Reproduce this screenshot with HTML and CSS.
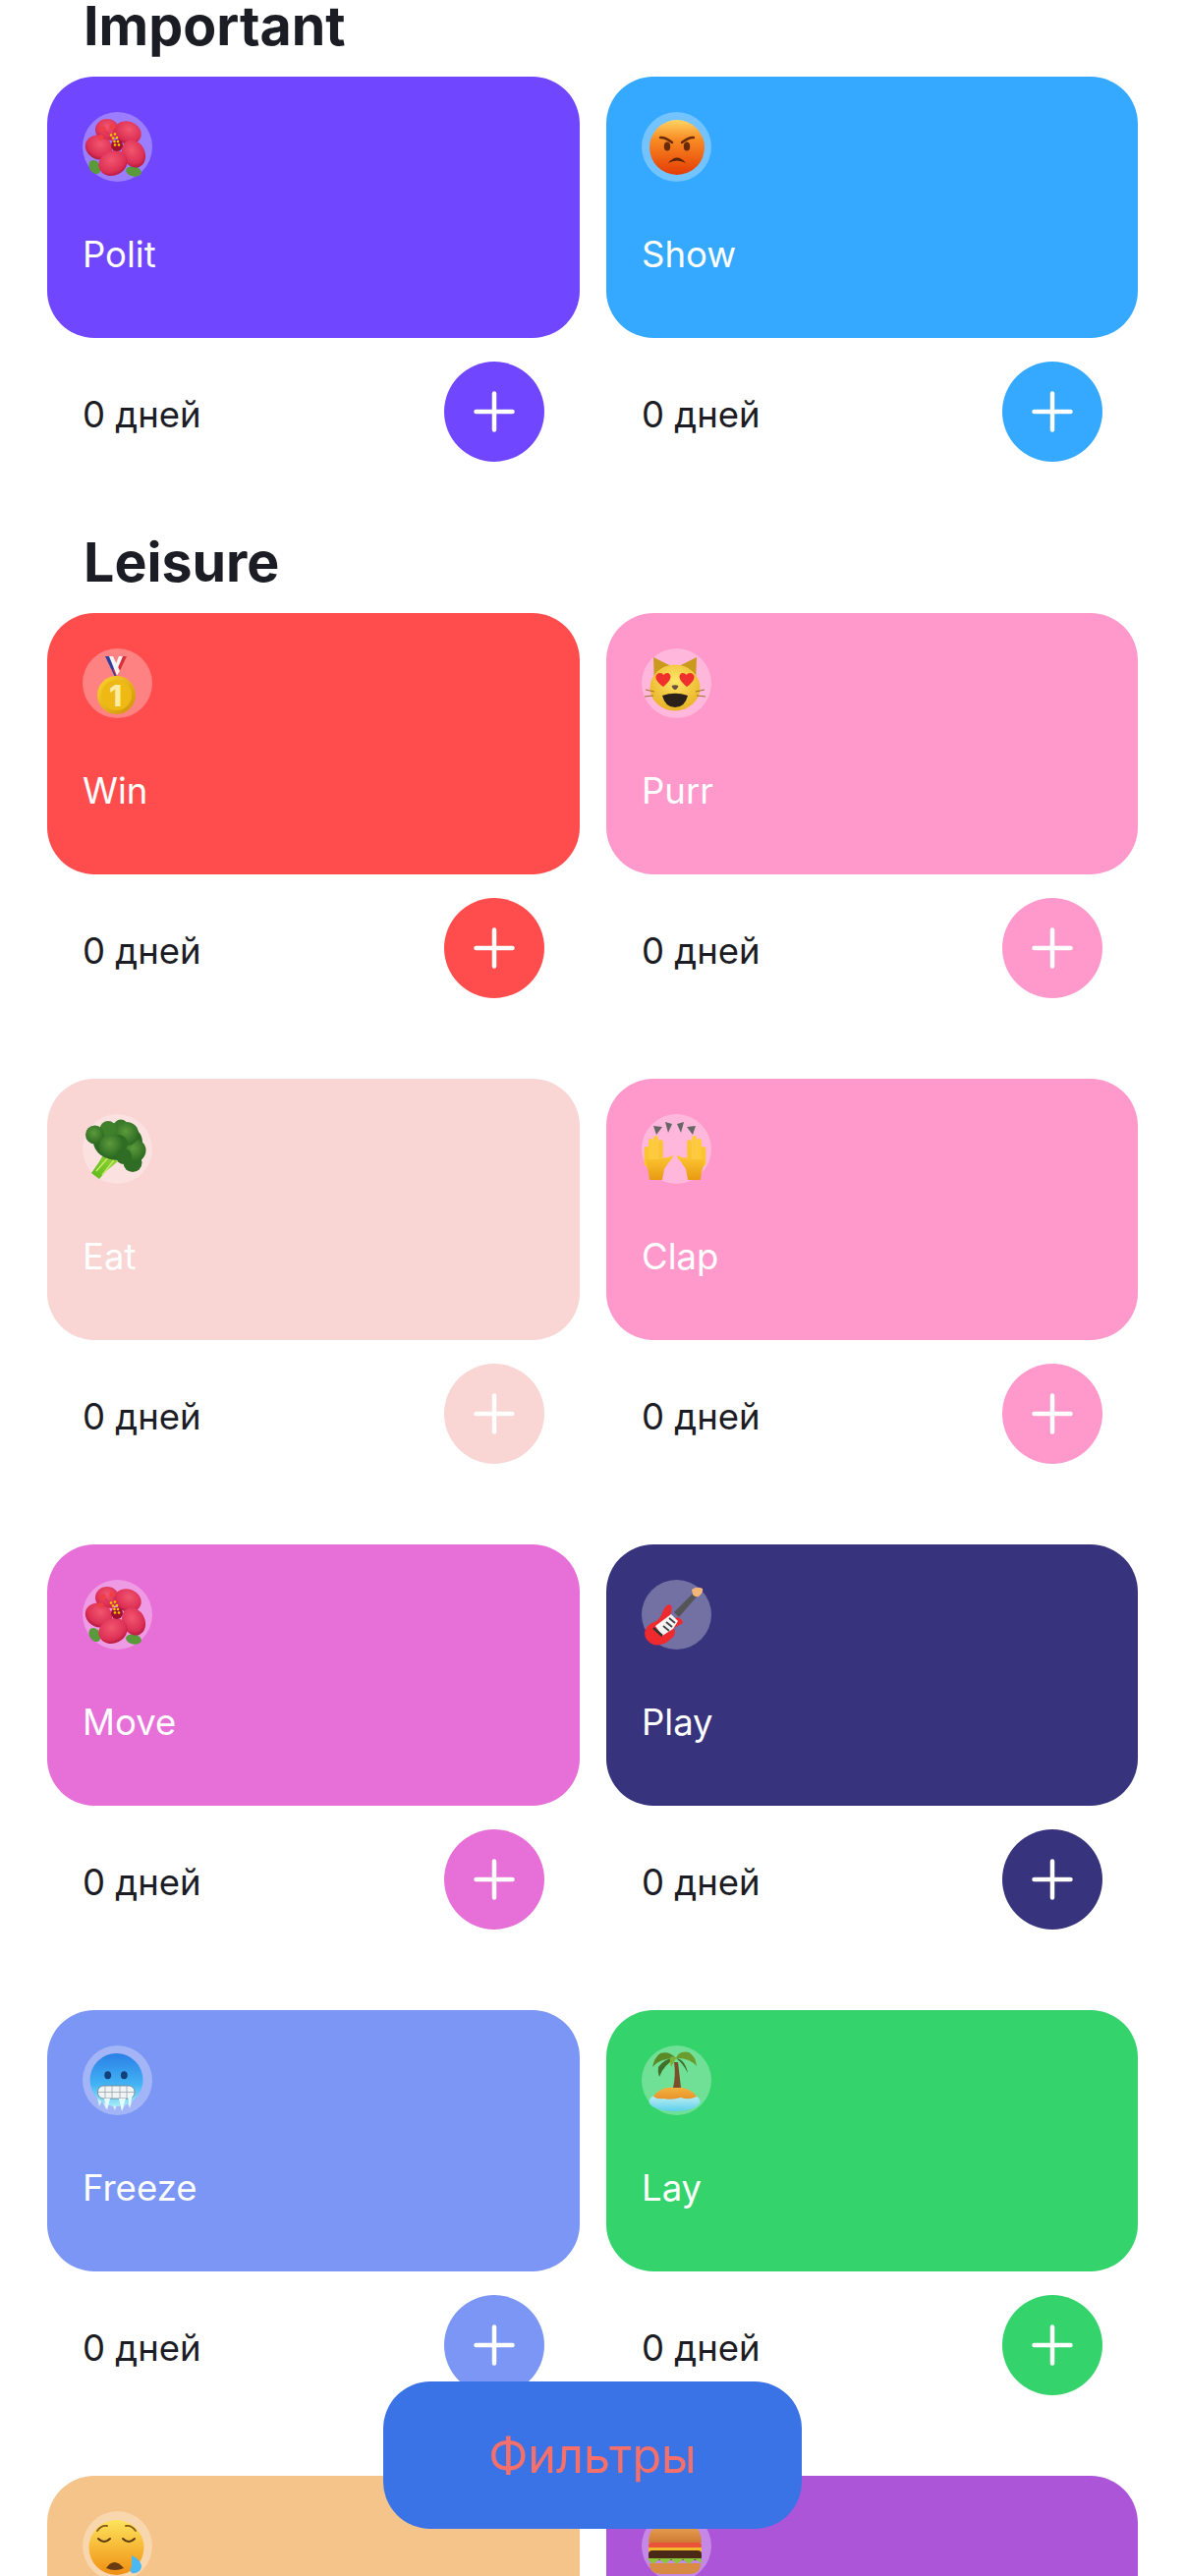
FILE: index.html
```html
<!DOCTYPE html>
<html lang="ru">
<head>
    <meta charset="UTF-8">
    <meta name="viewport" content="width=device-width, initial-scale=1.0">
    <title>Habits</title>
    <link rel="stylesheet" href="styles.css">
</head>
<body>
    <!-- emoji drawn once, used by every card -->
    <svg class="sprite" xmlns="http://www.w3.org/2000/svg">
        <defs>
            <radialGradient id="petal" cx="50%" cy="35%" r="70%">
                <stop offset="0" stop-color="#f2566f"/>
                <stop offset="0.7" stop-color="#dc2f55"/>
                <stop offset="1" stop-color="#a81038"/>
            </radialGradient>
            <linearGradient id="angryFace" x1="0" y1="0" x2="0" y2="1">
                <stop offset="0" stop-color="#ffd465"/>
                <stop offset="0.35" stop-color="#f98c25"/>
                <stop offset="1" stop-color="#e43c04"/>
            </linearGradient>
            <linearGradient id="gold" x1="0" y1="0" x2="1" y2="1">
                <stop offset="0" stop-color="#fbd62e"/>
                <stop offset="1" stop-color="#cf9008"/>
            </linearGradient>
            <radialGradient id="catFace" cx="50%" cy="35%" r="70%">
                <stop offset="0" stop-color="#fee668"/>
                <stop offset="1" stop-color="#e8ae20"/>
            </radialGradient>
            <radialGradient id="broc" cx="45%" cy="40%" r="60%">
                <stop offset="0" stop-color="#5c9a3c"/>
                <stop offset="1" stop-color="#2c6a22"/>
            </radialGradient>
            <linearGradient id="stalk" x1="1" y1="0" x2="0" y2="1">
                <stop offset="0" stop-color="#9bd53a"/>
                <stop offset="1" stop-color="#5cb81c"/>
            </linearGradient>
            <linearGradient id="hand" x1="0" y1="0" x2="0" y2="1">
                <stop offset="0" stop-color="#fcc733"/>
                <stop offset="1" stop-color="#e99a12"/>
            </linearGradient>
            <linearGradient id="coldFace" x1="0" y1="0" x2="0" y2="1">
                <stop offset="0" stop-color="#2a7fe6"/>
                <stop offset="0.6" stop-color="#43b4f4"/>
                <stop offset="1" stop-color="#a5ecf8"/>
            </linearGradient>
            <linearGradient id="sand" x1="0" y1="0" x2="0" y2="1">
                <stop offset="0" stop-color="#f3b340"/>
                <stop offset="1" stop-color="#e8922a"/>
            </linearGradient>
            <linearGradient id="sea" x1="0" y1="0" x2="0" y2="1">
                <stop offset="0" stop-color="#d7f6f4"/>
                <stop offset="1" stop-color="#5cd0ec"/>
            </linearGradient>
            <linearGradient id="sleepFace" x1="0" y1="0" x2="0" y2="1">
                <stop offset="0" stop-color="#fde35c"/>
                <stop offset="1" stop-color="#f08f12"/>
            </linearGradient>
            <linearGradient id="bun" x1="0" y1="0" x2="0" y2="1">
                <stop offset="0" stop-color="#f0b060"/>
                <stop offset="1" stop-color="#d07a34"/>
            </linearGradient>

            <symbol id="e-hibiscus" viewBox="0 0 72 72">
                <ellipse cx="12.500" cy="56" rx="5.500" ry="7.500" fill="#5a9a3a" transform="rotate(-30 12.500 56)"/>
                <ellipse cx="52" cy="60.500" rx="8" ry="5" fill="#5a9a3a" transform="rotate(10 52 60.500)"/>
                <ellipse cx="25" cy="18" rx="12" ry="11" fill="url(#petal)"/>
                <ellipse cx="46" cy="21" rx="14" ry="11.500" fill="url(#petal)" transform="rotate(20 46 21)"/>
                <ellipse cx="16.500" cy="36" rx="14" ry="12" fill="url(#petal)" transform="rotate(25 16.500 36)"/>
                <ellipse cx="52" cy="42.500" rx="11.500" ry="14.500" fill="url(#petal)" transform="rotate(-25 52 42.500)"/>
                <ellipse cx="31" cy="52" rx="15" ry="12.500" fill="url(#petal)" transform="rotate(-25 31 52)"/>
                <circle cx="35" cy="34" r="6" fill="#a0102e"/>
                <path d="M20 17 L32 27 M31 15 L33 27 M19 26 L32 29" stroke="#d8324e" stroke-width="1.300"/>
                <circle cx="20.500" cy="17.500" r="3" fill="#ee3f44"/>
                <circle cx="30.500" cy="15" r="3" fill="#ee3f44"/>
                <circle cx="18.500" cy="26" r="2.800" fill="#ee3f44"/>
                <g fill="#f7c900">
                    <circle cx="29" cy="23.500" r="1.300"/><circle cx="33" cy="22.500" r="1.300"/>
                    <circle cx="31" cy="26.500" r="1.300"/><circle cx="35" cy="26" r="1.300"/>
                    <circle cx="32.500" cy="30" r="1.300"/><circle cx="36" cy="30" r="1.300"/>
                    <circle cx="33" cy="33.500" r="1.300"/><circle cx="37" cy="33.500" r="1.300"/>
                </g>
            </symbol>

            <symbol id="e-angry" viewBox="0 0 72 72">
                <circle cx="36" cy="36" r="28" fill="url(#angryFace)"/>
                <path d="M19 26 Q24 25.500 31 31 M53 26 Q48 25.500 41 31" fill="none" stroke="#6a2a06" stroke-width="2.400" stroke-linecap="round"/>
                <ellipse cx="26" cy="35" rx="3.200" ry="4.600" fill="#6a2a06"/>
                <ellipse cx="46" cy="35" rx="3.200" ry="4.600" fill="#6a2a06"/>
                <path d="M27 52 Q36 41 45 52 Q36 47 27 52Z" fill="#5c2206"/>
            </symbol>

            <symbol id="e-medal" viewBox="0 0 72 72">
                <path d="M23 8 L30 8 L37 22 L33 29 Z" fill="#2c3f9e"/>
                <path d="M45 8 L38 8 L31 22 L35 29 Z" fill="#d8303a"/>
                <path d="M27 8 L31 8 L38 23 L35 28 Z" fill="#f4f4f4"/>
                <path d="M41 8 L37 8 L33 18 L35 22 Z" fill="#f4f4f4"/>
                <circle cx="34.500" cy="47.500" r="19.500" fill="url(#gold)"/>
                <circle cx="34.500" cy="47.500" r="15.500" fill="#efb915"/>
                <text class="medal-num" x="33.500" y="58.500" text-anchor="middle">1</text>
            </symbol>

            <symbol id="e-cat" viewBox="0 0 72 72">
                <path d="M12 9 L13 36 L32 19 Z" fill="#c99a1c"/>
                <path d="M56 9 L55 36 L36 19 Z" fill="#c99a1c"/>
                <ellipse cx="34" cy="40" rx="25.500" ry="23.500" fill="url(#catFace)"/>
                <path d="M4 42 L13 44 M3 49 L12 48 M64 42 L55 44 M65 49 L56 48" stroke="#8d6a1e" stroke-width="0.900"/>
                <path d="M22 39 C15 34 12.500 29 16 26 C18.500 24 21 25 22.500 27 C24 25 27.500 24 29 27 C31 30 27 35 22 39Z" fill="#f0302c"/>
                <path d="M46 39 C53 34 55.500 29 52 26 C49.500 24 47 25 45.500 27 C44 25 40.500 24 39 27 C37 30 41 35 46 39Z" fill="#f0302c"/>
                <path d="M30.500 38 Q34 36.500 37.500 38 Q36 42 34 42 Q32 42 30.500 38Z" fill="#6a5040"/>
                <path d="M21 48 Q34 43.500 47 48 Q44 60 34 60 Q24 60 21 48Z" fill="#2a2218"/>
            </symbol>

            <symbol id="e-broccoli" viewBox="0 0 72 72">
                <path d="M22 40 L36 48 L24 58 L17 66 L9 60 L16 50 Z" fill="url(#stalk)"/>
                <path d="M14 58 L28 42 M20 62 L32 47" stroke="#c6ea66" stroke-width="1.600"/>
                <ellipse cx="36" cy="28" rx="25" ry="19" fill="#2c6a22"/>
                <circle cx="51" cy="49.500" r="9.500" fill="#2f6d24"/>
                <circle cx="53" cy="37" r="11.500" fill="url(#broc)"/>
                <circle cx="39" cy="13" r="7.500" fill="#3a7a2a"/>
                <circle cx="26" cy="15.500" r="8.500" fill="#3f802c"/>
                <circle cx="45" cy="20" r="12" fill="url(#broc)"/>
                <circle cx="37" cy="30" r="9" fill="#2f6d24"/>
                <circle cx="12.500" cy="21" r="9.500" fill="url(#broc)"/>
                <circle cx="29" cy="32.500" r="12" fill="url(#broc)"/>
                <circle cx="42" cy="43" r="8" fill="#2f6d24"/>
            </symbol>

            <symbol id="e-hands" viewBox="0 0 72 72">
                <g fill="#666">
                    <path d="M12 12 L21 13 L15 21 Z"/>
                    <path d="M24 8 L31 10 L27 19 Z"/>
                    <path d="M43 8 L36 10 L40 19 Z"/>
                    <path d="M55 12 L46 13 L52 21 Z"/>
                </g>
                <g id="raisedHand">
                    <rect x="2.600" y="33" width="4.800" height="20" rx="2.400" fill="#fbc531"/>
                    <rect x="7" y="25" width="4.800" height="26" rx="2.400" fill="#fdcb38"/>
                    <rect x="12" y="22" width="4.800" height="28" rx="2.400" fill="#fdcb38"/>
                    <rect x="17" y="26" width="4.800" height="24" rx="2.400" fill="#fbc531"/>
                    <path d="M4 46 H22 L22.500 44 Q26 45.500 30 42.500 Q32 41.500 32 43.500 Q31 46 28 48.500 L23 56 L21 67 H8 Q7 58 5.500 54 Z" fill="url(#hand)"/>
                </g>
                <use href="#raisedHand" transform="translate(68 0) scale(-1 1)"/>
            </symbol>

            <symbol id="e-guitar" viewBox="0 0 72 72">
                <path d="M33 33 L53 13 L57 16 L38 38 Z" fill="#555"/>
                <path d="M51 10 Q56 6 62 9 Q63 13 58 17 Q54 18 52 15 Z" fill="#f2b778"/>
                <path d="M28 25 Q32 26 30 33 Q28 38 33 40 L36 38 Q42 40 42 44 L33 49 Q36 56 30 60 Q22 68 12 66 Q3 62 3 54 Q4 46 13 43 Q18 41 21 34 Q23 27 28 25Z" fill="#ee2a2e"/>
                <path d="M14 47 L30 35 L37 42 L32 50 L21 57 Z" fill="#f4f4f4"/>
                <path d="M22 47 L28 52 M25 43 L31 48 M28 39 L34 44" stroke="#444" stroke-width="1.800"/>
                <path d="M12 49 L21 57" stroke="#333" stroke-width="2.400"/>
            </symbol>

            <symbol id="e-cold" viewBox="0 0 72 72">
                <path d="M14 48 L17 62 L20 56 L24 65 L27 54 L33 66 L37 54 L40 67 L45 56 L48 64 L53 48 Z" fill="#cdf2f8"/>
                <circle cx="34.500" cy="35" r="27" fill="url(#coldFace)"/>
                <ellipse cx="25.700" cy="30.300" rx="3.400" ry="4" fill="#12407a"/>
                <ellipse cx="42.300" cy="30.300" rx="3.400" ry="4" fill="#12407a"/>
                <rect x="15.500" y="41" width="37.500" height="13" rx="6" fill="#f2f4f4" stroke="#6a7e90" stroke-width="0.800"/>
                <path d="M16 47.500 H53 M23 41 V54 M30 41 V54 M38 41 V54 M45 41 V54" stroke="#8a9aa8" stroke-width="0.700"/>
                <path d="M22 54 L25 66 L28 54 Z M37 54 L40 66 L44 54 Z M46 52 L48 62 L51 50 Z" fill="#e6fafc"/>
            </symbol>

            <symbol id="e-island" viewBox="0 0 72 72">
                <ellipse cx="33.500" cy="57" rx="26" ry="10" fill="url(#sea)"/>
                <path d="M12 52 Q18 42 33 42.500 Q50 42 56 52 Q48 56 40 53 Q30 56 22 54 Q16 55 12 52Z" fill="url(#sand)"/>
                <path d="M33 17 L37 17 L40 43 L32 43 Q35 30 33 17Z" fill="#7a5028"/>
                <path d="M35 13 Q28 5 19 8 Q13 12 11 22 Q18 13 35 13Z" fill="#5a8a28"/>
                <path d="M35 13 Q24 12 17 22 Q16 27 18 32 Q22 20 35 13Z" fill="#41702a"/>
                <path d="M35 13 Q38 5 48 7 Q55 11 56 21 Q48 12 35 13Z" fill="#6a9c2e"/>
                <path d="M35 13 Q44 14 47 28 Q42 18 35 13Z" fill="#41702a"/>
                <path d="M35 13 Q26 7 30 22 Q33 17 35 13Z" fill="#7cb236"/>
            </symbol>

            <symbol id="e-sleepy" viewBox="0 0 72 72">
                <circle cx="34.500" cy="37" r="28" fill="url(#sleepFace)"/>
                <path d="M15 20 Q19 14 25 15 M54 20 Q50 14 44 15" fill="none" stroke="#8a5a14" stroke-width="1.800" stroke-linecap="round"/>
                <path d="M16 28 Q22 34 28 28 M41 28 Q47 34 53 28" fill="none" stroke="#5c3a10" stroke-width="2" stroke-linecap="round"/>
                <path d="M24 58 Q32 46 42 58 Q33 62 24 58Z" fill="#6a3a14"/>
                <path d="M50 45 Q60 50 60 57 Q58 64 50 63 Q47 60 50 56 Q50 50 50 45Z" fill="#4bb8f2"/>
            </symbol>

            <symbol id="e-burger" viewBox="0 0 72 72">
                <path d="M7 32 Q8 8 34 8 Q60 8 61 32 Z" fill="url(#bun)"/>
                <rect x="7" y="32" width="54" height="6" rx="3" fill="#e8533a"/>
                <rect x="7" y="37" width="54" height="4" fill="#f4b82c"/>
                <rect x="7" y="40" width="54" height="10" rx="4" fill="#4a2a16"/>
                <path d="M6 49 L12 54 L18 49 L24 54 L30 49 L36 54 L42 49 L48 54 L54 49 L62 53 L60 48 L6 48Z" fill="#8cc63a"/>
                <path d="M8 53 H60 Q60 64 48 64 H20 Q8 64 8 53Z" fill="#d98a44"/>
            </symbol>

            <symbol id="plus" viewBox="0 0 42 42">
                <path d="M21 2.500 V39.500 M2.500 21 H39.500" fill="none" stroke="#fff" stroke-width="4.500" stroke-linecap="round"/>
            </symbol>
        </defs>
    </svg>

    <div class="screen">
        <div class="scroll">
            <section class="section">
                <h2 class="section-title">Important</h2>
                <div class="grid">
                    <article class="habit purple">
                        <div class="card">
                            <div class="icon"><svg><use href="#e-hibiscus"/></svg></div>
                            <div class="card-title">Polit</div>
                        </div>
                        <div class="footer">
                            <span class="days">0 дней</span>
                            <button class="add"><svg><use href="#plus"/></svg></button>
                        </div>
                    </article>
                    <article class="habit blue">
                        <div class="card">
                            <div class="icon"><svg><use href="#e-angry"/></svg></div>
                            <div class="card-title">Show</div>
                        </div>
                        <div class="footer">
                            <span class="days">0 дней</span>
                            <button class="add"><svg><use href="#plus"/></svg></button>
                        </div>
                    </article>
                </div>
            </section>

            <section class="section">
                <h2 class="section-title">Leisure</h2>
                <div class="grid">
                    <article class="habit red">
                        <div class="card">
                            <div class="icon"><svg><use href="#e-medal"/></svg></div>
                            <div class="card-title">Win</div>
                        </div>
                        <div class="footer">
                            <span class="days">0 дней</span>
                            <button class="add"><svg><use href="#plus"/></svg></button>
                        </div>
                    </article>
                    <article class="habit pink">
                        <div class="card">
                            <div class="icon"><svg><use href="#e-cat"/></svg></div>
                            <div class="card-title">Purr</div>
                        </div>
                        <div class="footer">
                            <span class="days">0 дней</span>
                            <button class="add"><svg><use href="#plus"/></svg></button>
                        </div>
                    </article>
                    <article class="habit blush">
                        <div class="card">
                            <div class="icon"><svg><use href="#e-broccoli"/></svg></div>
                            <div class="card-title">Eat</div>
                        </div>
                        <div class="footer">
                            <span class="days">0 дней</span>
                            <button class="add"><svg><use href="#plus"/></svg></button>
                        </div>
                    </article>
                    <article class="habit pink">
                        <div class="card">
                            <div class="icon"><svg><use href="#e-hands"/></svg></div>
                            <div class="card-title">Clap</div>
                        </div>
                        <div class="footer">
                            <span class="days">0 дней</span>
                            <button class="add"><svg><use href="#plus"/></svg></button>
                        </div>
                    </article>
                    <article class="habit orchid">
                        <div class="card">
                            <div class="icon"><svg><use href="#e-hibiscus"/></svg></div>
                            <div class="card-title">Move</div>
                        </div>
                        <div class="footer">
                            <span class="days">0 дней</span>
                            <button class="add"><svg><use href="#plus"/></svg></button>
                        </div>
                    </article>
                    <article class="habit navy">
                        <div class="card">
                            <div class="icon"><svg><use href="#e-guitar"/></svg></div>
                            <div class="card-title">Play</div>
                        </div>
                        <div class="footer">
                            <span class="days">0 дней</span>
                            <button class="add"><svg><use href="#plus"/></svg></button>
                        </div>
                    </article>
                    <article class="habit periwinkle">
                        <div class="card">
                            <div class="icon"><svg><use href="#e-cold"/></svg></div>
                            <div class="card-title">Freeze</div>
                        </div>
                        <div class="footer">
                            <span class="days">0 дней</span>
                            <button class="add"><svg><use href="#plus"/></svg></button>
                        </div>
                    </article>
                    <article class="habit green">
                        <div class="card">
                            <div class="icon"><svg><use href="#e-island"/></svg></div>
                            <div class="card-title">Lay</div>
                        </div>
                        <div class="footer">
                            <span class="days">0 дней</span>
                            <button class="add"><svg><use href="#plus"/></svg></button>
                        </div>
                    </article>
                    <article class="habit peach">
                        <div class="card">
                            <div class="icon"><svg><use href="#e-sleepy"/></svg></div>
                        </div>
                    </article>
                    <article class="habit violet">
                        <div class="card">
                            <div class="icon"><svg><use href="#e-burger"/></svg></div>
                        </div>
                    </article>
                </div>
            </section>
        </div>

        <button class="filters">Фильтры</button>
    </div>
</body>
</html>
```

FILE: styles.css
```css
body {
    margin: 0;
    background-color: #fff;
    font-family: Inter, "Noto Sans", sans-serif;
    color: #1c1c24;
}

.sprite {
    position: absolute;
    width: 0;
    height: 0;
}

.screen {
    position: relative;
    height: 2622px;
    overflow: hidden;
}

.scroll {
    padding: 0 48px;
}

.section {
    margin-bottom: 76px;
}

.section-title {
    margin: 0 0 26px 37px;
    font-size: 55.5px;
    line-height: 52px;
    font-weight: 700;
}

.grid {
    display: grid;
    grid-template-columns: 542px 541px;
    column-gap: 27px;
    row-gap: 82px;
}

.card {
    box-sizing: border-box;
    height: 266px;
    padding: 36px;
    border-radius: 48px;
    background-color: var(--tint);
}

.icon {
    width: 71px;
    height: 71px;
    border-radius: 50%;
    background-color: rgba(255, 255, 255, 0.3);
}

.icon svg {
    display: block;
    width: 72px;
    height: 72px;
    overflow: visible;
}

.medal-num {
    font-family: Inter, sans-serif;
    font-size: 30px;
    font-weight: 800;
    fill: #fdeba0;
}

.card-title {
    margin-top: 54px;
    font-size: 36.5px;
    line-height: 40px;
    color: #fff;
}

.footer {
    display: flex;
    justify-content: space-between;
    align-items: center;
    margin-top: 24px;
    padding: 0 36px;
}

.days {
    margin-top: 5px;
    font-size: 36.5px;
    line-height: 40px;
}

.add {
    display: flex;
    justify-content: center;
    align-items: center;
    width: 102px;
    height: 102px;
    padding: 0;
    border: none;
    border-radius: 50%;
    background-color: var(--tint);
}

.add svg {
    width: 42px;
    height: 42px;
}

.filters {
    position: absolute;
    left: 50%;
    bottom: 48px;
    width: 426px;
    height: 150px;
    margin-left: -213px;
    border: none;
    border-radius: 48px;
    background-color: #3973e6;
    color: #f56f6b;
    font-family: Inter, sans-serif;
    font-size: 48.5px;
}

.purple { --tint: #7047ff; }
.blue { --tint: #35a9ff; }
.red { --tint: #ff4d4d; }
.pink { --tint: #ff99cc; }
.blush { --tint: #f9d5d3; }
.orchid { --tint: #e76fd8; }
.navy { --tint: #37337c; }
.periwinkle { --tint: #7b96f4; }
.green { --tint: #34d36b; }
.peach { --tint: #f5c48b; }
.violet { --tint: #ac55d9; }
```
